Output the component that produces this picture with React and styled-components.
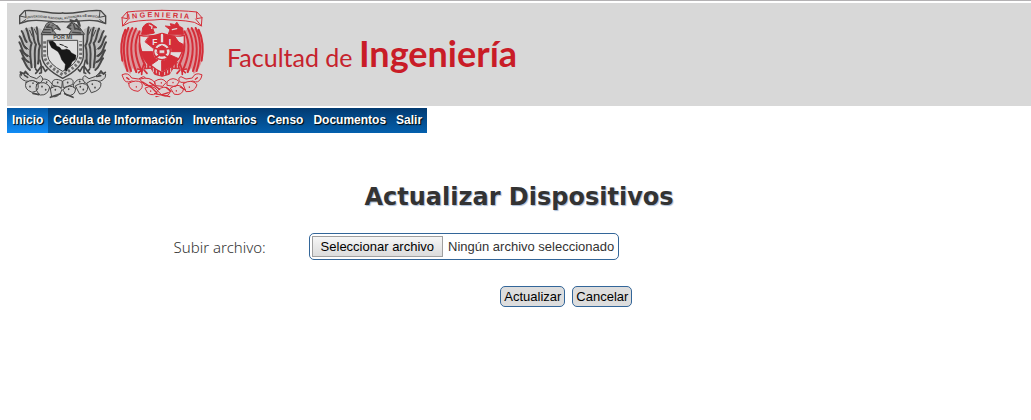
import React, { useState } from "react";
import styled, { createGlobalStyle } from "styled-components";

const GlobalStyle = createGlobalStyle`
  body {
    margin: 0;
    background: #fff;
    color: #333;
    font-family: "Liberation Sans", Arial, sans-serif;
  }
`;

const Page = styled.div`
  border-top: 1px solid #b4b2b4;
  padding: 2px 0 0 7px;
`;

const Banner = styled.header`
  display: flex;
  align-items: center;
  height: 103px;
  background: #d8d8d8;
`;

const Crest = styled.svg`
  flex: none;
  width: ${(p) => p.$width}px;
  height: 97px;
  margin-left: 10px;
`;

const Wordmark = styled.div`
  margin-left: 20px;
  color: #c6232d;
  font-family: Lato, sans-serif;
  font-size: 25px;
  line-height: 44px;
  white-space: nowrap;

  strong {
    font-size: 36px;
    font-weight: 700;
    color: #c91c27;
  }
`;

const Nav = styled.nav`
  display: flex;
  width: fit-content;
  margin-top: 2px;
  background: linear-gradient(#023a70, #0460ae);
`;

const NavLink = styled.a`
  padding: 0 5px;
  color: #fff;
  font-size: 12px;
  font-weight: 700;
  line-height: 25px;
  text-decoration: none;
  text-shadow: 1px 1px 1px #000;
  background: ${(p) => (p.$active ? "linear-gradient(#0459a5, #118cf5)" : "none")};
`;

const Main = styled.main`
  padding: 46px 0 40px;
`;

const Title = styled.h1`
  margin: 0;
  font-family: "DejaVu Sans", Verdana, sans-serif;
  font-size: 24px;
  line-height: 36px;
  text-align: center;
  text-shadow: 1px 1px 1px #a9bcd6;
`;

const Form = styled.form`
  width: 70%;
  margin: 18px auto 0;
`;

const Field = styled.div`
  display: flex;
  align-items: center;
  padding-left: 13px;
`;

const FieldLabel = styled.label`
  width: 135px;
  font-family: "Noto Sans", sans-serif;
  font-size: 15px;
  font-weight: 300;
  line-height: 26px;
`;

const FileBox = styled.div`
  position: relative;
  display: flex;
  align-items: center;
  gap: 5px;
  padding: 2px 4px 2px 2px;
  border: 1px solid #336699;
  border-radius: 5px;
  font-size: 13px;
  white-space: nowrap;
`;

const FileInput = styled.input`
  position: absolute;
  inset: 0;
  width: 100%;
  opacity: 0;
  cursor: pointer;
`;

const FileTrigger = styled.span`
  padding: 0 8px;
  border: 1px solid #a0a0a0;
  background: linear-gradient(#f6f6f6, #dcdcdc);
  color: #000;
  line-height: 19px;
`;

const Actions = styled.div`
  display: flex;
  justify-content: flex-end;
  gap: 7px;
  margin: 26px 245px 0 0;
`;

const Button = styled.button`
  padding: 0 3px;
  border: 1px solid #336699;
  border-radius: 5px;
  background: #ddd;
  color: #000;
  font-family: inherit;
  font-size: 13px;
  line-height: 19px;
`;

const links = ["Inicio", "Cédula de Información", "Inventarios", "Censo", "Documentos", "Salir"];

function Mirrored({ axis, children }) {
  return (
    <>
      <g>{children}</g>
      <g transform={`translate(${axis * 2} 0) scale(-1 1)`}>{children}</g>
    </>
  );
}

function UniversityCrest() {
  return (
    <Crest $width={90} viewBox="50 20 270 291" role="img" aria-label="UNAM">
      <g fill="none" stroke="#484848" strokeWidth="3" strokeLinejoin="round" strokeLinecap="round">
        <Mirrored axis={187}>
          <path d="M187 41C150 46 120 30 73 34L58 50V73L82 65C125 57 151 72 187 67" fill="#cfcfcf" strokeWidth="4" />
          <path d="M58 50L77 54L75 35M58 73L76 61" />
          <path
            d="M124 90C102 79 84 82 69 92C58 117 56 165 75 199L88 214L98 197L108 209L112 189L124 180L128 150Z"
            fill="#bcbcbc"
            stroke="none"
          />
          <path
            d="M64 95C72 106 71 120 79 128M58 111C68 123 66 142 79 148M57 129C66 143 64 162 81 170M60 153C69 167 70 183 85 188M66 177C74 186 76 203 89 212M78 88C86 102 84 123 94 131C85 153 91 180 94 204M94 85C102 105 97 124 107 135C99 157 106 182 104 204M109 84C116 107 108 126 119 139C110 161 119 177 113 193"
            strokeWidth="6"
          />
          <path d="M88 93L96 111M102 89L109 105M71 137L84 150M71 159L88 172M77 181L91 193" strokeWidth="3" />
          <path d="M119 183L123 200L112 216M123 200L123 220M127 202L135 216M112 216L106 209M112 216L106 222M123 220L118 222M135 216L140 211" strokeWidth="5" />
        </Mirrored>
        <path
          d="M123 104L133 84Q140 65 153 69L170 80L178 91L164 87L159 94L169 106ZM205 106L213 94L202 82Q206 70 220 71L235 80L252 104Z"
          fill="#888"
        />
        <path d="M139 83L154 84L157 95M132 91L149 91M129 99L151 100M147 75L139 84M220 75L224 90M217 99L241 101M222 86L241 92M229 77L236 87" strokeWidth="4" />
        <circle cx="156" cy="79" r="2" fill="#d8d8d8" strokeWidth="2" />
        <path d="M170 80L179 91M211 77L201 84L211 88M215 71L210 62L223 66L229 60L236 77M235 66L239 80" strokeWidth="5" />
        <path d="M125 106H249V172Q246 207 187 237Q128 207 125 172Z" fill="#d8d8d8" strokeWidth="4" />
        <path
          d="M133 126V172Q137 198 187 226Q237 198 241 172V126"
          strokeWidth="9"
          strokeDasharray="7 6"
          strokeLinecap="butt"
          stroke="#707070"
        />
        <path d="M142 123H232V170Q229 194 187 216Q145 194 142 170Z" fill="#e0e0e0" />
        <path
          d="M145 126L157 125L165 132L169 140L178 144L184 151L191 151L199 149L208 153L213 160L227 168L226 180L215 188L211 199L203 207L199 216L193 212L195 195L184 181L179 168L173 157L164 151L154 145L149 136Z"
          fill="#181818"
          stroke="#181818"
          strokeWidth="1"
        />
        <path d="M179 135L189 138M193 141L201 144" stroke="#181818" strokeWidth="3" />
        <path
          d="M185 245C160 232 151 248 158 258L183 265ZM188 245C212 230 224 242 216 256L190 265ZM155 254C140 232 119 237 120 252L152 267ZM219 256C230 233 252 237 253 251L223 268Z"
          fill="#d1d1d1"
        />
        <path
          d="M60 224Q79 215 89 231L109 238L120 229Q135 239 119 251L95 243Q75 252 60 235ZM315 224Q298 215 286 231L266 238L253 229Q239 239 258 253L281 243Q303 252 314 235Z"
          fill="#cecece"
        />
        <path
          d="M77 250Q99 235 113 254Q118 276 95 279Q69 269 77 250ZM109 255Q134 241 148 263Q143 289 120 287Q102 275 109 255ZM151 267Q174 252 185 271Q176 297 155 292ZM188 271Q207 251 226 268Q224 292 200 288ZM226 259Q248 245 263 260Q262 286 239 284ZM260 251Q282 234 302 251Q304 273 274 280Z"
          fill="#d1d1d1"
        />
        <path
          d="M73 228L82 234M98 251V252M89 261V262M125 261V262M136 271V272M165 271V272M205 269V270M240 262V263M249 270V271M276 254V255M284 264V265M172 249V250M202 249V250M139 248V249M238 246V247M289 231L301 229M63 227L60 218L71 224L75 216L83 225M296 224L302 215L309 224L315 219M150 294L180 283M193 283L218 294M98 282L116 286"
          strokeWidth="5"
        />
      </g>
      <path id="university-motto" d="M78 58C128 47 151 64 187 60S248 47 310 58" fill="none" />
      <g fill="#444" fontFamily="Liberation Sans, sans-serif" fontWeight="700">
        <text fontSize="9">
          <textPath href="#university-motto">UNIVERSIDAD NACIONAL AUTONOMA DE MEXICO</textPath>
        </text>
        <text x="187" y="120" fontSize="16" textAnchor="middle">
          POR MI
        </text>
      </g>
    </Crest>
  );
}

function FacultyCrest() {
  return (
    <Crest $width={90} viewBox="20 20 270 291" role="img" aria-label="Facultad de Ingeniería">
      <g fill="none" stroke="#d42d38" strokeWidth="3" strokeLinejoin="round" strokeLinecap="round">
        <path d="M86 190H224L211 209L188 207L177 225L155 231L133 225L122 207L99 209Z" fill="#d42d38" />
        <path d="M99 194V204M109 193V204M119 193V204M129 199V218M138 200V221M147 207V226M163 207V226M172 200V221M181 199V218M191 193V204M201 193V204M211 194V204" stroke="#ded0d1" />
        <Mirrored axis={155}>
          <path d="M155 33C118 34 85 34 50 38L35 55L37 80L58 69C94 61 121 64 155 60" fill="#ddd6d6" />
          <path d="M35 55L51 58L51 39M37 80L54 59" />
          <path
            d="M97 104C77 80 50 84 37 104C26 143 30 190 50 216L60 224L67 206L78 222L87 204L96 218L108 190L92 153Z"
            fill="#dd9499"
            stroke="none"
          />
          <path
            d="M45 91C32 119 30 151 36 184M54 86C38 119 37 167 51 215M66 86C46 121 47 174 62 215M77 88C57 127 60 174 78 218M88 96C67 131 75 177 94 215M94 112C80 141 91 172 105 199"
            strokeWidth="6"
          />
          <path d="M100 196L95 211L82 209M95 211L85 220M95 211L94 225M101 212L110 222" strokeWidth="5" />
        </Mirrored>
        <path d="M94 104L97 85Q106 69 121 72L140 85L127 86L132 101L112 105ZM174 104L179 91L165 80L183 82L180 73L193 76L200 69L207 81L217 86L219 104Z" fill="#d42d38" />
        <path d="M117 77L125 81L124 87M186 91L199 88" stroke="#dedada" strokeWidth="4" />
        <path d="M88 108Q119 115 155 102Q191 115 222 108Q227 184 155 220Q83 184 88 108Z" fill="#e2dede" strokeWidth="4" />
        <path d="M117 111Q139 111 155 102Q171 111 193 111L205 128L181 147Q168 129 155 131Q142 129 129 147L105 128Z" fill="#d42d38" />
        <path d="M92 157H127Q129 176 143 182L119 199Q98 183 92 157ZM182 145L205 128L218 135L216 157H184ZM155 184Q172 183 180 167L205 178L187 199L155 216Z" fill="#d42d38" />
        <path d="M155 107V130" stroke="#e2dede" strokeWidth="7" />
        <circle cx="155" cy="156" r="25" fill="#e2dede" strokeWidth="4" />
        <path d="M144 145L155 139L166 145L169 161L160 170H149L141 161Z" fill="#d42d38" />
        <path d="M147 152H163V162H147Z" fill="#e2dede" strokeWidth="2" />
        <path d="M134 147L142 149M136 174L147 168M176 147L168 149M174 174L163 168" strokeWidth="5" />
        <path
          d="M36 226Q54 217 64 236L84 239L99 232Q112 235 101 248L83 249L64 245Q44 254 39 237ZM274 226Q254 217 246 236L227 239L212 232Q199 237 211 249L231 249L247 245Q264 254 272 237Z"
          fill="#ded0d1"
        />
        <path
          d="M55 252Q77 239 94 250Q101 267 83 276Q55 274 55 252ZM89 239Q120 230 135 251Q128 263 105 258ZM133 246Q155 231 168 249L157 261L137 259ZM171 246Q188 229 207 247L196 262L171 258ZM105 266Q127 254 142 274Q132 294 113 282ZM142 273Q161 254 180 272Q178 295 157 289ZM181 266Q206 249 220 268Q216 290 193 285ZM219 253Q244 237 260 256Q254 279 228 277Z"
          fill="#ded0d1"
        />
        <path d="M97 248L123 264L140 281M118 249L148 270M167 264L182 277M210 263L225 272M78 262V263M121 275V276M198 274V275M237 263V264M153 250V251M188 249V250M49 235L56 240M255 240L261 235M133 283L178 292M137 292L174 280" strokeWidth="4" />
      </g>
      <path id="faculty-name" d="M54 60Q103 52 155 54T262 61" fill="none" />
      <g fill="#d42d38" fontFamily="Liberation Sans, sans-serif" fontWeight="700">
        <text fontSize="22">
          <textPath href="#faculty-name">I N G E N I E R I A</textPath>
        </text>
        <g fill="#eee6e6">
          <text x="126" y="137" fontSize="25">
            F
          </text>
          <text x="175" y="137" fontSize="25">
            I
          </text>
        </g>
      </g>
    </Crest>
  );
}

export default function App() {
  const [fileName, setFileName] = useState("");

  return (
    <Page>
      <GlobalStyle />
      <Banner>
        <UniversityCrest />
        <FacultyCrest />
        <Wordmark>
          Facultad de <strong>Ingeniería</strong>
        </Wordmark>
      </Banner>
      <Nav>
        {links.map((link, i) => (
          <NavLink key={link} href="#" $active={i === 0}>
            {link}
          </NavLink>
        ))}
      </Nav>
      <Main>
        <Title>Actualizar Dispositivos</Title>
        <Form onSubmit={(e) => e.preventDefault()}>
          <Field>
            <FieldLabel htmlFor="archivo">Subir archivo:</FieldLabel>
            <FileBox>
              <FileTrigger aria-hidden="true">Seleccionar archivo</FileTrigger>
              <span>{fileName || "Ningún archivo seleccionado"}</span>
              <FileInput
                id="archivo"
                type="file"
                onChange={(e) => setFileName(e.target.files[0]?.name ?? "")}
              />
            </FileBox>
          </Field>
          <Actions>
            <Button type="submit">Actualizar</Button>
            <Button type="button">Cancelar</Button>
          </Actions>
        </Form>
      </Main>
    </Page>
  );
}
